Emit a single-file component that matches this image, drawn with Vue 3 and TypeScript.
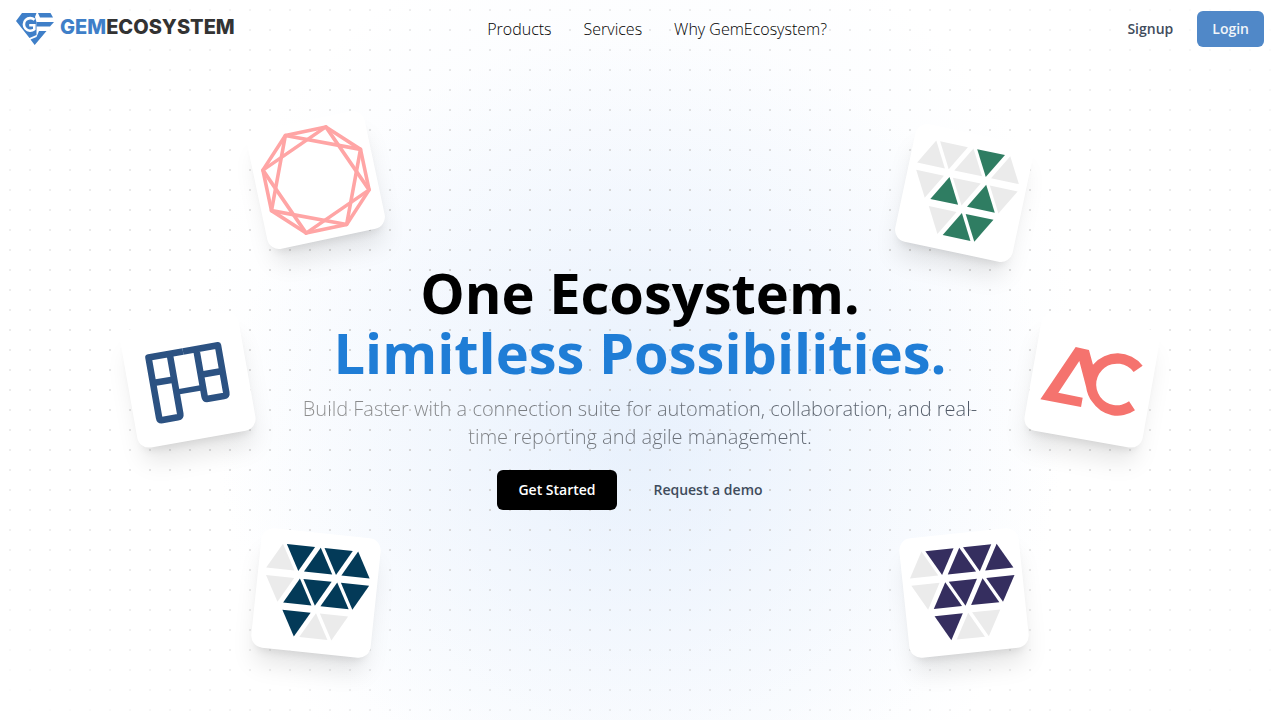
<script setup lang="ts">
interface Tri {
  points: string
  key: string
}

interface Gem {
  name: string
  color: string
  active: string[]
}

const navItems: string[] = ['Products', 'Services', 'Why GemEcosystem?']

const rows = [
  { top: 14.4, startsUp: true, centers: [22, 40.1, 60, 78, 97.6] },
  { top: 47.3, startsUp: false, centers: [22.6, 42.5, 60.2, 80, 97.9] },
  { top: 80.1, startsUp: false, centers: [42.5, 62.1, 80.2] },
]

const triangles: Tri[] = rows.flatMap((row, r) =>
  row.centers.map((cx, i) => {
    const up = row.startsUp === (i % 2 === 0)
    const apex = up ? row.top : row.top + 25.5
    const base = up ? row.top + 25.5 : row.top
    return { key: `${r}-${i}`, points: `${cx - 14.2},${base} ${cx + 14.2},${base} ${cx},${apex}` }
  }),
)

const filled = ['0-1', '0-2', '0-3', '0-4', '1-1', '1-2', '1-3', '1-4', '2-0']

const gems: Gem[] = [
  { name: 'green', color: '#2f7d62', active: ['0-3', '1-1', '1-3', '2-1', '2-2'] },
  { name: 'navy', color: '#033a58', active: filled },
  { name: 'purple', color: '#352e5f', active: filled },
]
</script>

<template>
  <div class="page">
    <div class="glow"></div>
    <div class="dots"></div>

    <header class="header">
      <a class="brand" href="#" aria-label="GemEcosystem">
        <svg class="brand-mark" viewBox="0 0 38 32" aria-hidden="true">
          <path d="M6 0H20.5L19 4L20.5 9V22L13.5 25L0 8Z" />
          <path d="M22 0H34.5L37 4.4H24Z" />
          <path d="M20.5 9H38L34 13.6H20.5Z" />
          <path d="M23 18H30.5L18.7 32L14.5 26.6L20.5 24Z" />
          <path class="brand-cut" d="M18.5 6.8A6.3 6.3 0 1 0 18.3 16.2V12.3H13.2" />
        </svg>
        <span class="brand-name"><span class="brand-gem">GEM</span>ECOSYSTEM</span>
      </a>
      <nav class="nav">
        <a v-for="item in navItems" :key="item" href="#">{{ item }}</a>
      </nav>
      <div class="actions">
        <button class="btn signup" type="button">Signup</button>
        <button class="btn login" type="button">Login</button>
      </div>
    </header>

    <div class="card octagon">
      <svg viewBox="0 0 120 120" aria-hidden="true">
        <g fill="none" stroke="#ffa5a5" stroke-width="3.6" stroke-linejoin="round">
          <path d="M39.3 10.1H80.7L109.9 39.3V80.7L80.7 109.9H39.3L10.1 80.7V39.3Z" />
          <path d="M39.3 10.1L109.9 39.3L80.7 109.9L10.1 80.7Z" />
          <path d="M80.7 10.1L109.9 80.7L39.3 109.9L10.1 39.3Z" />
        </g>
      </svg>
    </div>
    <div class="card board">
      <svg viewBox="0 0 120 120" aria-hidden="true">
        <g fill="none" stroke="#2c5282" stroke-width="6.6" stroke-linejoin="round">
          <path d="M60 31H95.5V79Q95.5 82 92.5 82H76.5Q73.5 82 73.5 79V31" />
          <path d="M60 31H25V92Q25 95 28 95H43.5Q46.5 95 46.5 92V31" />
          <path d="M25 57H46.5M73.5 57H95.5" />
          <path d="M46.5 70H73.5" stroke-width="5.4" />
        </g>
      </svg>
    </div>
    <div class="card letters">
      <svg viewBox="0 0 120 120" aria-hidden="true">
        <path
          fill="#f5736e"
          d="M12.5 88L38.2 30.3L51.8 31L58.3 44.7A32 32 0 0 1 107.4 37.1L99.6 44.9A20.8 20.8 0 1 0 100.2 74.6L107.6 82.4A30.4 30.4 0 0 1 64 81.5Q58 76 55.3 67.6L44.2 43.5L29 78.3L53.9 79V88.5Z"
        />
      </svg>
    </div>
    <div v-for="gem in gems" :key="gem.name" class="card" :class="gem.name">
      <svg viewBox="0 0 120 120" aria-hidden="true">
        <polygon
          v-for="tri in triangles"
          :key="tri.key"
          :points="tri.points"
          :fill="gem.active.includes(tri.key) ? gem.color : '#ebebeb'"
        />
      </svg>
    </div>

    <main class="hero">
      <h1 class="title">One Ecosystem.<br /><span class="accent">Limitless Possibilities.</span></h1>
      <p class="lead">
        Build Faster with a connection suite for automation, collaboration, and real-time reporting and agile
        management.
      </p>
      <div class="cta">
        <button class="btn start" type="button">Get Started</button>
        <button class="btn demo" type="button">Request a demo</button>
      </div>
    </main>
  </div>
</template>

<style>
body {
  margin: 0;
  background: #fff;
}
</style>

<style scoped>
.page {
  position: relative;
  display: flex;
  flex-direction: column;
  min-height: 100vh;
  overflow: hidden;
  font-family: 'Segoe UI', 'Open Sans', 'Noto Sans', sans-serif;
  color: #000;
}

.glow,
.dots {
  position: absolute;
  inset: 0;
  pointer-events: none;
}

.glow {
  background:
    radial-gradient(circle at 50% 63%, rgba(214, 230, 250, 0.42), rgba(224, 236, 252, 0.28) 200px, rgba(240, 246, 254, 0) 420px),
    radial-gradient(circle at 50% 50%, #f4f8fe, #fff 440px);
}

.dots {
  background: radial-gradient(circle, #d4d4d4 1px, transparent 1px) 0 0 / 20px 20px;
  mask-image: radial-gradient(ellipse at center, #000 30%, transparent 100%);
}

.header {
  position: relative;
  display: flex;
  align-items: center;
  justify-content: space-between;
  padding: 11px 16px;
}

.brand {
  display: flex;
  align-items: center;
  gap: 6px;
  text-decoration: none;
}

.brand-mark {
  width: 38px;
  height: 32px;
  fill: #3f7fc8;
}

.brand-cut {
  fill: none;
  stroke: #fff;
  stroke-width: 2.6;
}

.brand-name {
  padding-bottom: 4px;
  font-family: Inter, sans-serif;
  font-size: 20px;
  line-height: 24px;
  font-weight: 800;
  color: #333;
}

.brand-gem {
  color: #3f7fc8;
}

.nav {
  display: flex;
  gap: 32px;
}

.nav a {
  color: #000;
  font-size: 16px;
  line-height: 24px;
  font-weight: 300;
  text-decoration: none;
}

.actions {
  display: flex;
  padding-left: 24px;
}

.btn {
  border: 0;
  border-radius: 6px;
  background: transparent;
  font-family: inherit;
  font-size: 14px;
  line-height: 20px;
  font-weight: 600;
  color: #3f4c5c;
  cursor: pointer;
}

.signup {
  padding: 8px 24px;
}

.login {
  padding: 8px 15px;
  background: #5088c8;
  color: #f1f5f9;
}

.card {
  position: absolute;
  width: 120px;
  height: 120px;
  border-radius: 12px;
  background: #fff;
  box-shadow:
    0 20px 25px -5px rgba(0, 0, 0, 0.1),
    0 8px 10px -6px rgba(0, 0, 0, 0.1);
}

.card svg {
  display: block;
  width: 100%;
  height: 100%;
}

.octagon {
  top: 120px;
  left: calc(50% - 384px);
  transform: rotate(-12deg);
}

.board {
  top: 320px;
  left: calc(50% - 512px);
  transform: rotate(-10deg);
}

.navy {
  top: 533px;
  left: calc(50% - 384px);
  transform: rotate(6deg);
}

.green {
  top: 133px;
  right: calc(50% - 384px);
  transform: rotate(12deg);
}

.letters {
  top: 320px;
  right: calc(50% - 512px);
  transform: rotate(10deg);
}

.purple {
  top: 533px;
  right: calc(50% - 384px);
  transform: rotate(-6deg);
}

.hero {
  position: relative;
  flex: 1;
  display: flex;
  flex-direction: column;
  align-items: center;
  justify-content: center;
  padding: 0 16px 6px;
  text-align: center;
}

.title {
  margin: 0;
  font-size: 56px;
  line-height: 60px;
  font-weight: 700;
}

.accent {
  color: #1f7dd6;
}

.lead {
  max-width: 688px;
  margin: 13px 0 19px;
  font-size: 20px;
  line-height: 28px;
  font-weight: 300;
  color: transparent;
  background: linear-gradient(90deg, #909090, #4b5563);
  background-clip: text;
}

.cta {
  display: flex;
  gap: 16px;
}

.start {
  min-width: 120px;
  padding: 10px 16px;
  background: #000;
  color: #fff;
}

.demo {
  min-width: 150px;
  padding: 10px 16px;
}
</style>
